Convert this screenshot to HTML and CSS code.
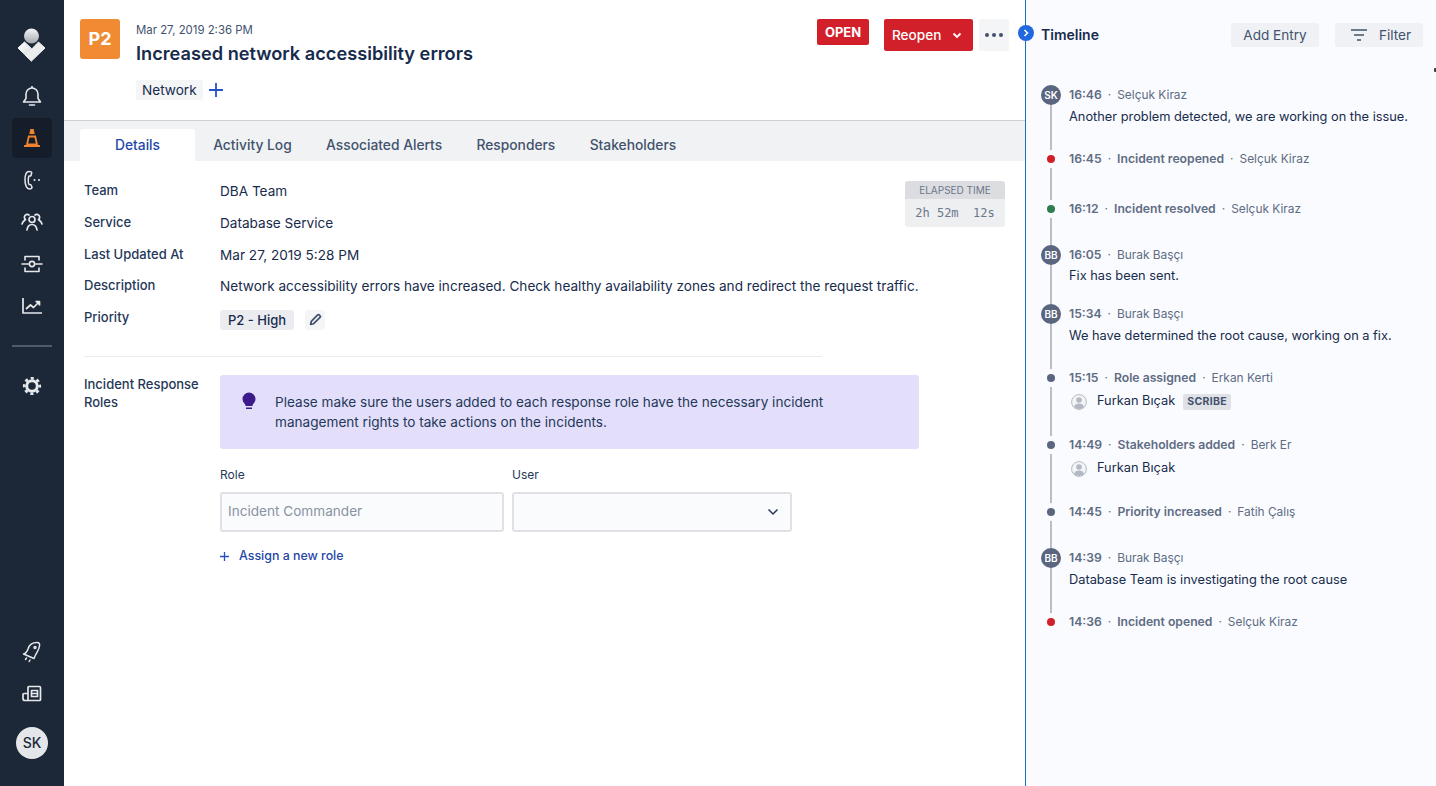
FILE: index.html
```html
<!DOCTYPE html>
<html lang="en">
<head>
  <meta charset="UTF-8">
  <title>Increased network accessibility errors</title>
  <link rel="stylesheet" href="styles.css">
</head>
<body>
<div id="app">
  <nav class="sidebar">
    <div class="logo">
      <svg width="32" height="36" viewBox="0 0 32 36">
        <defs>
          <linearGradient id="logoTop" x1="0" y1="0" x2="0" y2="1"><stop offset="0" stop-color="#f4f5f7"/><stop offset="1" stop-color="#a5a8ae"/></linearGradient>
          <linearGradient id="logoLeft" x1="0" y1="0" x2="1" y2="1"><stop offset="0" stop-color="#fff"/><stop offset="1" stop-color="#d5d7da"/></linearGradient>
        </defs>
        <circle cx="15.500" cy="9" r="7.500" fill="url(#logoTop)"/>
        <path d="M8.500 15L15.500 21.500L15.500 34L2 21Z" fill="url(#logoLeft)" stroke="url(#logoLeft)" stroke-linejoin="round"/>
        <path d="M22.500 15L29 21L15.500 34L9.500 28.500Z" fill="#eceded" stroke="#eceded" stroke-linejoin="round"/>
      </svg>
    </div>
    <a class="nav-item">
      <svg width="20" height="22" viewBox="0 0 20 22" fill="none" stroke="#e6e8eb" stroke-width="1.600" stroke-linejoin="round"><path d="M1.500 17h17l-2.500-3.500V9a6 6 0 0 0-12 0v4.500z"/><path d="M10 1v2"/><path d="M7.500 20h5" stroke-linecap="round"/></svg>
    </a>
    <a class="nav-item nav-item-active">
      <svg width="18" height="20" viewBox="0 0 18 20"><path d="M7.300 1h3.400l1 5H6.300z" fill="#f0852f"/><path d="M5.800 8.500h6.400l1.800 8H4z" fill="none" stroke="#f0852f" stroke-width="1.800"/><path d="M1 17h16v2H1z" fill="#f0852f"/></svg>
    </a>
    <a class="nav-item">
      <svg width="20" height="22" viewBox="0 0 20 22" fill="none" stroke="#e6e8eb" stroke-width="1.500" stroke-linejoin="round"><path d="M7 2.500c-2.500 0-4 3-4 8.500s2 9 4.500 9c1.500 0 2.500-1 2.500-2l-1-2c-.5-.8-1.500-.5-2-.5-1-1-1-7 0-8.500.5 0 1.500.3 2-.5l.7-2.500c.2-1-.8-1.500-2.700-1.500z"/><circle cx="12.500" cy="11" r="1" fill="#e6e8eb" stroke="none"/><circle cx="17" cy="11" r="1" fill="#e6e8eb" stroke="none"/></svg>
    </a>
    <a class="nav-item">
      <svg width="22" height="20" viewBox="0 0 22 20" fill="none" stroke="#e6e8eb" stroke-width="1.700" stroke-linecap="round" stroke-linejoin="round"><circle cx="11" cy="7.500" r="3"/><path d="M6 18c.5-3.500 2.500-5.500 5-5.500s4.500 2 5 5.500"/><path d="M8 3A2.500 2.500 0 1 0 4.500 7.500c.3.300-3 1.500-3.500 4.500"/><path d="M14 3A2.500 2.500 0 1 1 17.500 7.500c-.3.300 3 1.500 3.500 4.500"/></svg>
    </a>
    <a class="nav-item">
      <svg width="22" height="20" viewBox="0 0 22 20" fill="none" stroke="#e6e8eb" stroke-width="1.600" stroke-linecap="round" stroke-linejoin="round"><path d="M4 6V2.500h14V6"/><path d="M4 14v3.500h14V14"/><path d="M1 10h6.500M14.500 10H21"/><circle cx="11" cy="10" r="2.600"/></svg>
    </a>
    <a class="nav-item">
      <svg width="22" height="20" viewBox="0 0 22 20" fill="none" stroke="#e6e8eb" stroke-width="1.700" stroke-linejoin="round"><path d="M2 2v15h19"/><path d="M5 13l4.500-4 3 2.500L18 6"/><path d="M14.500 5.500H18.500V9.500" fill="#e6e8eb"/></svg>
    </a>
    <div class="nav-rule"></div>
    <a class="nav-item">
      <svg width="20" height="20" viewBox="0 0 20 20" fill="none" stroke="#e6e8eb"><circle cx="10" cy="10" r="5.300" stroke-width="3"/><circle cx="10" cy="10" r="7.800" stroke-width="2.600" stroke-dasharray="3.100 3.020" stroke-dashoffset="1.500"/></svg>
    </a>
    <div class="sidebar-bottom">
      <a class="nav-item">
        <svg width="20" height="22" viewBox="0 0 20 22" fill="none" stroke="#e6e8eb" stroke-width="1.500" stroke-linejoin="round" stroke-linecap="round"><path d="M1.500 13c2.500-.5 3.500-2 4.500-5 1-3.500 4-6.500 9-6.500 2 0 3 1 2.500 3.500-.5 4-3 7-4 9-1 2-1 3-1.500 3.500z"/><circle cx="13" cy="6.500" r="1"/><path d="M4.500 17l-1 1.500M8 19l-.8 1.500"/></svg>
      </a>
      <a class="nav-item">
        <svg width="20" height="18" viewBox="0 0 20 18" fill="none" stroke="#e6e8eb" stroke-width="1.700" stroke-linejoin="round"><path d="M6 15.500V2.500a1 1 0 0 1 1-1h10.500a1 1 0 0 1 1 1v12a1 1 0 0 1-1 1H3a2 2 0 0 1-2-2V9.500a1 1 0 0 1 1-1h4"/><path d="M9.500 5.500h6v6h-6zM9.500 8.500h6"/></svg>
      </a>
      <div class="user-avatar">SK</div>
    </div>
  </nav>

  <main class="main">
    <header class="incident-head">
      <div class="priority-box">P2</div>
      <div class="incident-info">
        <div class="incident-date">Mar 27, 2019 2:36 PM</div>
        <h1 class="incident-title">Increased network accessibility errors</h1>
        <div class="incident-tags">
          <span class="tag">Network</span>
          <svg width="14" height="14" viewBox="0 0 14 14" stroke="#2451c6" stroke-width="1.800"><path d="M7 0v14M0 7h14"/></svg>
        </div>
      </div>
      <div class="incident-actions">
        <span class="status-open">OPEN</span>
        <button class="btn-reopen">Reopen
          <svg width="10" height="7" viewBox="0 0 10 7" fill="none" stroke="#fff" stroke-width="1.800"><path d="M1.500 1.500L5 5l3.500-3.500"/></svg>
        </button>
        <button class="btn-more"><i></i><i></i><i></i></button>
      </div>
    </header>

    <ul class="tabs">
      <li class="tab tab-active">Details</li>
      <li class="tab">Activity Log</li>
      <li class="tab">Associated Alerts</li>
      <li class="tab">Responders</li>
      <li class="tab">Stakeholders</li>
    </ul>

    <section class="details">
      <div class="elapsed">
        <div class="elapsed-head">ELAPSED TIME</div>
        <div class="elapsed-body">2h 52m  12s</div>
      </div>
      <div class="field"><div class="field-label">Team</div><div class="field-value">DBA Team</div></div>
      <div class="field"><div class="field-label">Service</div><div class="field-value">Database Service</div></div>
      <div class="field"><div class="field-label">Last Updated At</div><div class="field-value">Mar 27, 2019 5:28 PM</div></div>
      <div class="field"><div class="field-label">Description</div><div class="field-value">Network accessibility errors have increased. Check healthy availability zones and redirect the request traffic.</div></div>
      <div class="field">
        <div class="field-label">Priority</div>
        <div class="field-value priority-value">
          <span class="priority-tag">P2 - High</span>
          <span class="edit-btn">
            <svg width="13" height="13" viewBox="0 0 12 12" fill="none" stroke="#42526e" stroke-width="1.600" stroke-linejoin="round"><path d="M1.500 10.500l.6-2.800L8 1.800a1 1 0 0 1 1.400 0l.8.800a1 1 0 0 1 0 1.400L4.300 9.900z"/></svg>
          </span>
        </div>
      </div>
      <div class="details-rule"></div>
      <div class="roles">
        <div class="roles-label">Incident Response Roles</div>
        <div class="roles-body">
          <div class="notice">
            <svg width="14" height="19" viewBox="0 0 14 19"><path d="M7 .5a6.500 6.500 0 0 1 6.500 6.500c0 2.500-1.500 3.800-2.500 5.200-.4.600-.5 1.300-.6 1.800H3.600c-.1-.5-.2-1.200-.6-1.800C2 10.800.5 9.500.5 7A6.500 6.500 0 0 1 7 .5z" fill="#3c1a8c"/><path d="M4 15.500h6v1.500H4z" fill="#3c1a8c"/></svg>
            <p>Please make sure the users added to each response role have the necessary incident management rights to take actions on the incidents.</p>
          </div>
          <div class="role-form">
            <div class="role-col role-col-role">
              <label class="role-label">Role</label>
              <div class="role-input role-placeholder">Incident Commander</div>
            </div>
            <div class="role-col role-col-user">
              <label class="role-label">User</label>
              <div class="role-input role-select">
                <svg width="12" height="8" viewBox="0 0 12 8" fill="none" stroke="#253858" stroke-width="1.500"><path d="M1.500 1.500L6 6l4.500-4.500"/></svg>
              </div>
            </div>
          </div>
          <a class="assign-link">
            <svg width="9" height="9" viewBox="0 0 9 9" stroke="#2451c6" stroke-width="1.300"><path d="M4.500 0v9M0 4.500h9"/></svg>
            Assign a new role
          </a>
        </div>
      </div>
    </section>
  </main>

  <aside class="timeline">
    <span class="timeline-toggle">
      <svg width="6" height="8" viewBox="0 0 6 8" fill="none" stroke="#fff" stroke-width="1.500"><path d="M1.500 1l3 3-3 3"/></svg>
    </span>
    <span class="cursor-mark"></span>
    <div class="timeline-head">
      <h2 class="timeline-title">Timeline</h2>
      <button class="btn-light btn-add">Add Entry</button>
      <button class="btn-light btn-filter">
        <svg width="16" height="12" viewBox="0 0 16 12" stroke="#42526e" stroke-width="1.600"><path d="M0 1h16M3 6h10M6 11h4"/></svg>
        Filter
      </button>
    </div>
    <ol class="entries">
      <li class="entry gap-22">
        <span class="entry-avatar">SK</span>
        <div class="entry-head"><b>16:46</b><em>·</em>Selçuk Kiraz</div>
        <div class="entry-text">Another problem detected, we are working on the issue.</div>
      </li>
      <li class="entry gap-30">
        <span class="entry-dot dot-red"></span>
        <div class="entry-head"><b>16:45</b><em>·</em><b>Incident reopened</b><em>·</em>Selçuk Kiraz</div>
      </li>
      <li class="entry gap-26">
        <span class="entry-dot dot-green"></span>
        <div class="entry-head"><b>16:12</b><em>·</em><b>Incident resolved</b><em>·</em>Selçuk Kiraz</div>
      </li>
      <li class="entry gap-18">
        <span class="entry-avatar">BB</span>
        <div class="entry-head"><b>16:05</b><em>·</em>Burak Başçı</div>
        <div class="entry-text entry-text-tight">Fix has been sent.</div>
      </li>
      <li class="entry gap-22">
        <span class="entry-avatar">BB</span>
        <div class="entry-head"><b>15:34</b><em>·</em>Burak Başçı</div>
        <div class="entry-text">We have determined the root cause, working on a fix.</div>
      </li>
      <li class="entry gap-24">
        <span class="entry-dot"></span>
        <div class="entry-head"><b>15:15</b><em>·</em><b>Role assigned</b><em>·</em>Erkan Kerti</div>
        <div class="entry-user">
          <svg width="16" height="16" viewBox="0 0 16 16"><circle cx="8" cy="8" r="7.400" fill="#f4f5f7" stroke="#b3b9c4" stroke-width="1"/><circle cx="8" cy="6" r="2.800" fill="#b3b9c4"/><path d="M3 13c.5-2.500 2.500-3.500 5-3.500s4.500 1 5 3.500a7 7 0 0 1-10 0z" fill="#b3b9c4"/></svg>
          Furkan Bıçak <span class="badge">SCRIBE</span>
        </div>
      </li>
      <li class="entry gap-24">
        <span class="entry-dot"></span>
        <div class="entry-head"><b>14:49</b><em>·</em><b>Stakeholders added</b><em>·</em>Berk Er</div>
        <div class="entry-user">
          <svg width="16" height="16" viewBox="0 0 16 16"><circle cx="8" cy="8" r="7.400" fill="#f4f5f7" stroke="#b3b9c4" stroke-width="1"/><circle cx="8" cy="6" r="2.800" fill="#b3b9c4"/><path d="M3 13c.5-2.500 2.500-3.500 5-3.500s4.500 1 5 3.500a7 7 0 0 1-10 0z" fill="#b3b9c4"/></svg>
          Furkan Bıçak
        </div>
      </li>
      <li class="entry gap-26">
        <span class="entry-dot"></span>
        <div class="entry-head"><b>14:45</b><em>·</em><b>Priority increased</b><em>·</em>Fatih Çalış</div>
      </li>
      <li class="entry gap-22">
        <span class="entry-avatar">BB</span>
        <div class="entry-head"><b>14:39</b><em>·</em>Burak Başçı</div>
        <div class="entry-text">Database Team is investigating the root cause</div>
      </li>
      <li class="entry">
        <span class="entry-dot dot-red"></span>
        <div class="entry-head"><b>14:36</b><em>·</em><b>Incident opened</b><em>·</em>Selçuk Kiraz</div>
      </li>
    </ol>
  </aside>
</div>
</body>
</html>
```

FILE: styles.css
```css
html, body, div, ul, ol, li, p, h1, h2 {padding:0; margin:0;}
ul, ol {list-style:none;}
body {font-family:Inter, "Liberation Sans", sans-serif; font-size:14px; color:#172b4d; background:#fff;}
button {font-family:inherit; border:0; padding:0; cursor:pointer;}
em {font-style:normal;}

#app {display:flex; width:1436px; height:786px; overflow:hidden;}

/* sidebar */
.sidebar {display:flex; flex-direction:column; align-items:center; flex:0 0 64px; height:786px; background:#1c2738;}
.logo {height:36px; margin:27px 0 13px;}
.nav-item {display:flex; align-items:center; justify-content:center; width:40px; height:40px; margin-bottom:2px;}
.nav-item-active {background:#151d2a; border-radius:4px;}
.nav-rule {width:40px; height:2px; margin:17px 0 19px; background:#4f5a6b;}
.sidebar-bottom {display:flex; flex-direction:column; align-items:center; margin-top:auto; padding-bottom:27px;}
.user-avatar {width:32px; height:32px; margin-top:11px; border-radius:50%; font-size:14px; font-weight:500; line-height:32px; text-align:center; color:#1c2738; background:#e4e6ea;}

/* main column */
.main {flex:0 0 961px; min-width:0;}
.incident-head {display:flex; height:121px; padding:19px 16px 0; box-sizing:border-box; border-bottom:1px solid #cfd1d4;}
.priority-box {flex:0 0 40px; height:40px; border-radius:3px; font-size:18px; font-weight:700; line-height:40px; text-align:center; color:#fff; background:#f08a33;}
.incident-info {flex:1; padding-left:16px;}
.incident-date {margin-top:3px; font-size:11.400px; line-height:16px; color:#42526e;}
.incident-title {margin-top:2px; font-size:18.200px; font-weight:600; line-height:26px; color:#172b4d;}
.incident-tags {display:flex; align-items:center; gap:6px; margin-top:14px;}
.tag {height:20px; padding:0 6px; border-radius:3px; font-size:13.600px; line-height:20px; background:#f4f5f7;}
.incident-actions {display:flex; align-items:flex-start;}
.status-open {width:52px; height:26px; margin-right:15px; border-radius:2px; font-size:13px; font-weight:700; line-height:26px; text-align:center; color:#fff; background:#d2202a;}
.btn-reopen {display:flex; align-items:center; justify-content:space-between; width:89px; height:32px; padding:0 11px 0 8px; margin-right:6px; border-radius:2px; font-size:13.600px; font-weight:500; color:#fff; background:#d2202a;}
.btn-more {display:flex; align-items:center; justify-content:center; gap:3px; width:30px; height:32px; border-radius:2px; background:#f4f5f7;}
.btn-more i {width:4px; height:4px; border-radius:50%; background:#42526e;}

.tabs {display:flex; height:40px; padding:8px 16px 0; box-sizing:border-box; background:#f1f2f4;}
.tab {padding:0 17.200px; font-size:13.800px; font-weight:500; line-height:32px; color:#42526e;}
.tab-active {width:115px; padding:0; margin-right:1px; border-radius:3px 3px 0 0; text-align:center; color:#1f47a8; background:#fff;}

.details {position:relative; padding:13px 20px 0;}
.field {display:flex; height:31.750px; line-height:31.750px;}
.field-label {flex:0 0 136px; padding-top:1px; font-size:13px; font-weight:500; color:#253858;}
.field-value {padding-top:2px; font-size:13.600px; color:#172b4d;}
.priority-value {display:flex; align-items:center; gap:11px; padding-top:6px;}
.priority-tag {height:20px; padding:0 8px; border-radius:3px; font-size:13px; font-weight:500; line-height:20px; background:#ebecf0;}
.edit-btn {display:flex; align-items:center; justify-content:center; width:20px; height:20px; border-radius:3px; background:#f4f5f7;}
.details-rule {width:738px; height:1px; margin-top:23.250px; background:#ebecf0;}

/* sits over the right end of the field rows */
.elapsed {position:absolute; top:20px; right:20px; width:100px; border-radius:3px; overflow:hidden; text-align:center;}
.elapsed-head {height:18px; font-size:10px; font-weight:400; line-height:18px; color:#6b778c; background:#dcdde0;}
.elapsed-body {height:28px; font-family:"DejaVu Sans Mono", monospace; font-size:12px; line-height:28px; white-space:pre; color:#6b778c; background:#eeeff1;}

.roles {display:flex; padding-top:18px;}
.roles-label {flex:0 0 136px; padding-right:20px; box-sizing:border-box; font-size:13px; font-weight:500; line-height:18px; color:#253858;}
.roles-body {flex:0 0 699px;}
.notice {display:flex; height:74px; padding:17px 20px 0 22px; box-sizing:border-box; border-radius:3px; background:#e3dffb;}
.notice svg {flex:0 0 14px; margin-right:19px;}
.notice p {width:590px; font-size:13.600px; line-height:20px; color:#253858;}
.role-form {display:flex; gap:8px; margin-top:16px;}
.role-col-role {flex:0 0 284px;}
.role-col-user {flex:0 0 280px;}
.role-label {display:block; height:20px; margin-bottom:7px; font-size:12px; line-height:20px; color:#253858;}
.role-input {display:flex; align-items:center; height:40px; padding:0 6px; box-sizing:border-box; border:2px solid #dfe1e6; border-radius:3px; font-size:13.600px; background:#fafbfc;}
.role-placeholder {padding-bottom:2px; color:#8993a4;}
.role-select {justify-content:flex-end; padding-right:11px;}
.assign-link {display:flex; align-items:center; gap:10px; margin-top:14px; font-size:12.400px; font-weight:500; line-height:20px; color:#1f47a8;}

/* timeline */
.timeline {position:relative; flex:1; box-sizing:border-box; height:786px; padding:23px 13px 0 15px; border-left:1px solid #1c6fb8; background:#fafbfe;}
.timeline-toggle {position:absolute; top:25px; left:-8px; display:flex; align-items:center; justify-content:center; width:16px; height:16px; border-radius:50%; background:#2168e0;}
.cursor-mark {position:absolute; top:68px; right:0; width:2px; height:4px; border-radius:1px 0 0 1px; background:#3a3f47;}
.timeline-head {display:flex; align-items:center; height:24px;}
.timeline-title {flex:1; padding-bottom:2px; font-size:14px; font-weight:600; color:#172b4d;}
.btn-light {height:24px; border-radius:3px; font-size:13.600px; color:#42526e; background:#eff1f4;}
.btn-add {width:88px; margin-right:16px;}
.btn-filter {display:flex; align-items:center; gap:12px; width:88px; padding-left:16px; box-sizing:border-box;}

.entries {position:relative; margin-top:38px; padding-left:28px;}
.entries::before {content:""; position:absolute; top:10px; bottom:10px; left:9px; width:2px; background:#b9bec8;}
.entry {position:relative;}
.gap-18 {padding-bottom:18px;}
.gap-22 {padding-bottom:22px;}
.gap-24 {padding-bottom:24px;}
.gap-26 {padding-bottom:26px;}
.gap-30 {padding-bottom:30px;}
.entry-head {font-size:11.900px; line-height:20px; color:#5e6c84;}
.entry-head b {font-size:12.200px; font-weight:600;}
.entry-head em {margin:0 6px;}
.entry-text {margin-top:2px; font-size:12.800px; line-height:20px; color:#172b4d;}
.entry-text-tight {margin-top:1px;}
.entry-user {display:flex; align-items:flex-start; height:20px; margin-top:3px; font-size:12.800px; line-height:19px; color:#172b4d;}
.entry-user svg {margin:3px 10px 0 2px;}
.badge {height:16px; padding:0 4px; margin:3px 0 0 8px; border-radius:2px; font-size:10.500px; font-weight:700; line-height:16px; letter-spacing:.3px; color:#42526e; background:#dfe1e6;}
.entry-avatar {position:absolute; top:0; left:-28px; width:20px; height:20px; border-radius:50%; font-size:10px; font-weight:600; line-height:20px; text-align:center; color:#fff; background:#5a6580;}
.entry-dot {position:absolute; top:6px; left:-22px; width:8px; height:8px; border-radius:50%; background:#5a6580; box-shadow:0 0 0 5px #fafbfe;}
.dot-red {background:#d2202a;}
.dot-green {background:#2e7d4f;}
```
